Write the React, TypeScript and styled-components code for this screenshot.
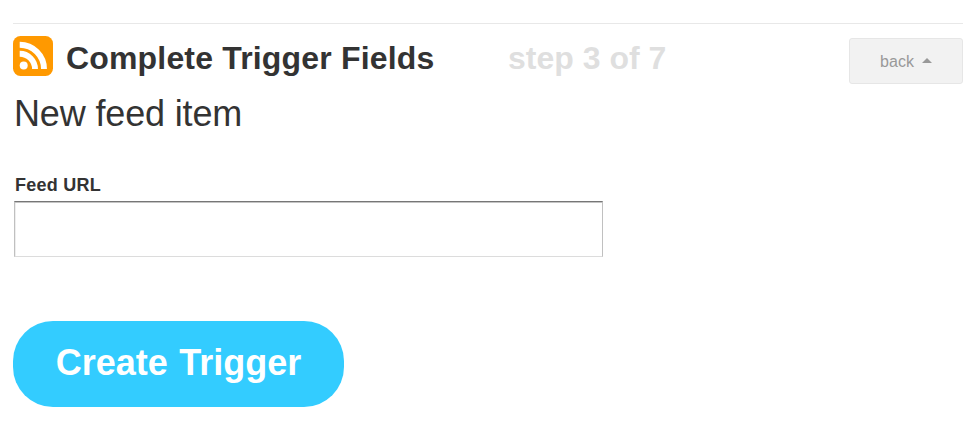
import React from "react";
import styled, { createGlobalStyle } from "styled-components";

const GlobalStyle = createGlobalStyle`
  * { box-sizing: border-box; }
  body {
    margin: 0;
    background: #fff;
    color: #333;
    font-family: "Liberation Sans", Arial, sans-serif;
  }
`;

const Step = styled.main`
  display: flex;
  flex-direction: column;
  align-items: flex-start;
  margin: 23px 4px 0 13px;
  border-top: 1px solid #e8e8e8;
`;

const Header = styled.header`
  display: flex;
  align-items: flex-start;
  width: 100%;
  height: 62px;
  padding-top: 12px;
`;

const FeedIcon = styled.svg`
  display: block;
  flex: none;
  width: 40px;
  height: 40px;
`;

const Title = styled.h1`
  width: 442px;
  margin: 3px 0 0 13px;
  font-size: 32px;
  line-height: 38px;
  letter-spacing: 0.17px;
  white-space: nowrap;
`;

const Progress = styled.span`
  margin-top: 3px;
  color: #dfdfdf;
  font-size: 32px;
  font-weight: bold;
  line-height: 38px;
  white-space: nowrap;
`;

const BackButton = styled.button`
  display: flex;
  align-items: center;
  justify-content: center;
  gap: 8px;
  width: 114px;
  height: 46px;
  margin: 2px 0 0 auto;
  padding: 2px 0 0;
  border: 1px solid #e6e6e6;
  border-radius: 3px;
  background: #f2f2f2;
  color: #999;
  font: 16px "Liberation Sans", Arial, sans-serif;
`;

const Caret = styled.span`
  border: 5px solid transparent;
  border-top: 0;
  border-bottom-color: #999;
  margin-top: -4px;
`;

const EventName = styled.h2`
  margin: 7px 0 0 1px;
  font-size: 36px;
  font-weight: normal;
  line-height: 42px;
  letter-spacing: -0.15px;
`;

const FieldLabel = styled.label`
  margin: 39px 0 0 2px;
  font-size: 18px;
  font-weight: bold;
  line-height: 22px;
  letter-spacing: 0.25px;
`;

const UrlInput = styled.input`
  width: 589px;
  height: 56px;
  margin: 5px 0 0 1px;
  padding: 0 12px;
  border: 1px solid #c0c0c0;
  border-top-color: #767676;
  border-bottom-color: #dcdcdc;
  border-radius: 0;
  outline: 0;
  background: #fff;
  box-shadow: inset 0 1px 0 #c4c4c4, inset 1px 0 0 #eee;
  font-size: 18px;
`;

const CreateButton = styled.button`
  width: 331px;
  height: 86px;
  margin-top: 64px;
  padding: 0 0 3px;
  border: 0;
  border-radius: 40px;
  background: #3cf;
  color: #fff;
  font: bold 36px "Liberation Sans", Arial, sans-serif;
  word-spacing: 1.5px;
  white-space: nowrap;
`;

export default function App() {
  return (
    <>
      <GlobalStyle />
      <Step>
        <Header>
          <FeedIcon viewBox="0 0 40 40" aria-hidden="true">
            <rect width="40" height="40" rx="7.5" fill="#f90" />
            <circle cx="10.7" cy="29.6" r="4" fill="#fff" />
            <path
              d="M6.7 17.8a15.3 15.3 0 0 1 15.3 15.3M6.7 8.8a24.3 24.3 0 0 1 24.3 24.3"
              fill="none"
              stroke="#fff"
              strokeWidth="5.9"
            />
          </FeedIcon>
          <Title>Complete Trigger Fields</Title>
          <Progress>step 3 of 7</Progress>
          <BackButton type="button">
            back
            <Caret />
          </BackButton>
        </Header>
        <EventName>New feed item</EventName>
        <FieldLabel htmlFor="feed-url">Feed URL</FieldLabel>
        <UrlInput id="feed-url" type="text" />
        <CreateButton type="button">Create Trigger</CreateButton>
      </Step>
    </>
  );
}
